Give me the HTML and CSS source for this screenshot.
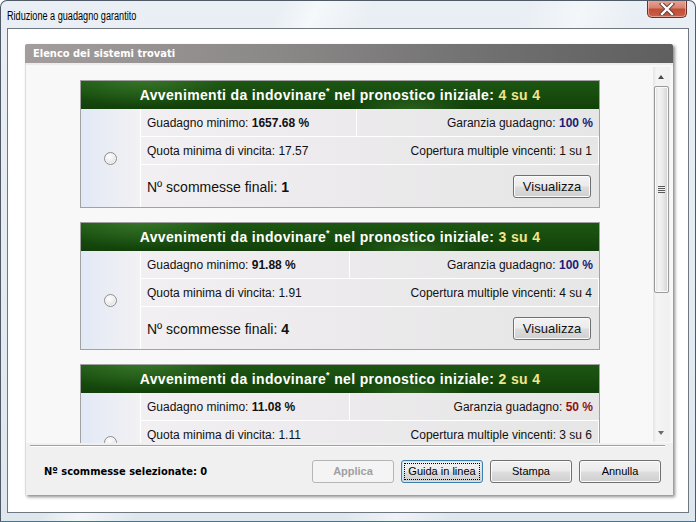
FILE: index.html
```html
<!DOCTYPE html>
<html>
<head>
<meta charset="utf-8">
<link rel="stylesheet" href="styles.css">
</head>
<body>
<div class="window">
  <div class="titlebar">
    <span class="title">Riduzione a guadagno garantito</span>
    <div class="close">
      <svg width="16" height="12" viewBox="0 0 16 12"><path d="M3 1 L13 11 M13 1 L3 11" stroke="#5a3a34" stroke-width="4.2" stroke-linecap="square"/><path d="M3 1 L13 11 M13 1 L3 11" stroke="#ffffff" stroke-width="2.4" stroke-linecap="square"/></svg>
    </div>
  </div>
  <div class="client">
    <div class="panel">
      <div class="panel-head">Elenco dei sistemi trovati</div>
      <div class="panel-body">
        <div class="list">
          <div class="cards">
            <div class="card c1">
              <div class="card-head">Avvenimenti da indovinare<sup>*</sup> nel pronostico iniziale: <span class="hl">4 su 4</span></div>
              <div class="grid">
                <div class="radio-cell"><span class="radio"></span></div>
                <div class="cell"><span>Guadagno minimo: <b>1657.68 %</b></span></div>
                <div class="cell right"><span>Garanzia guadagno: <b class="blue">100 %</b></span></div>
                <div class="cell"><span>Quota minima di vincita: 17.57</span></div>
                <div class="cell right"><span>Copertura multiple vincenti: 1 su 1</span></div>
                <div class="cell big"><span>Nº scommesse finali: <b>1</b></span></div>
                <div class="cell right"><button class="vis">Visualizza</button></div>
              </div>
            </div>
            <div class="card c2">
              <div class="card-head">Avvenimenti da indovinare<sup>*</sup> nel pronostico iniziale: <span class="hl">3 su 4</span></div>
              <div class="grid">
                <div class="radio-cell"><span class="radio"></span></div>
                <div class="cell"><span>Guadagno minimo: <b>91.88 %</b></span></div>
                <div class="cell right"><span>Garanzia guadagno: <b class="blue">100 %</b></span></div>
                <div class="cell"><span>Quota minima di vincita: 1.91</span></div>
                <div class="cell right"><span>Copertura multiple vincenti: 4 su 4</span></div>
                <div class="cell big"><span>Nº scommesse finali: <b>4</b></span></div>
                <div class="cell right"><button class="vis">Visualizza</button></div>
              </div>
            </div>
            <div class="card c2">
              <div class="card-head">Avvenimenti da indovinare<sup>*</sup> nel pronostico iniziale: <span class="hl">2 su 4</span></div>
              <div class="grid">
                <div class="radio-cell"><span class="radio"></span></div>
                <div class="cell"><span>Guadagno minimo: <b>11.08 %</b></span></div>
                <div class="cell right"><span>Garanzia guadagno: <b class="red">50 %</b></span></div>
                <div class="cell"><span>Quota minima di vincita: 1.11</span></div>
                <div class="cell right"><span>Copertura multiple vincenti: 3 su 6</span></div>
                <div class="cell big"><span>Nº scommesse finali: <b>6</b></span></div>
                <div class="cell right"><button class="vis">Visualizza</button></div>
              </div>
            </div>
          </div>
          <div class="scrollbar">
            <div class="arrow up"></div>
            <div class="thumb"><span class="grip"></span></div>
            <div class="track"></div>
            <div class="arrow down"></div>
          </div>
        </div>
        <div class="separator"></div>
        <div class="footer">
          <span class="selected">Nº scommesse selezionate: 0</span>
          <div class="buttons">
            <button class="btn disabled">Applica</button>
            <button class="btn focused"><span class="focus-ring">Guida in linea</span></button>
            <button class="btn">Stampa</button>
            <button class="btn">Annulla</button>
          </div>
        </div>
      </div>
    </div>
  </div>
</div>
</body>
</html>
```

FILE: styles.css
```css
* { box-sizing: border-box; }
html, body { margin: 0; padding: 0; }
body { width: 696px; height: 522px; overflow: hidden; background: #ffffff; }

.window {
  width: 696px;
  height: 522px;
  border: 1px solid #4f5a66;
  border-bottom-color: #2f7f9a;
  border-radius: 7px 7px 0 0;
  background:
    linear-gradient(115deg, rgba(255,255,255,0) 30%, rgba(255,255,255,0.6) 34%, rgba(255,255,255,0) 40%),
    linear-gradient(110deg, rgba(255,255,255,0) 60%, rgba(255,255,255,0.5) 66%, rgba(255,255,255,0) 72%),
    linear-gradient(180deg, #e9eff4 0%, #dfe7ee 100%);
  display: flex;
  flex-direction: column;
  overflow: hidden;
  font-family: "Liberation Sans", Arial, sans-serif;
}

.titlebar {
  height: 27px;
  flex: none;
  display: flex;
  align-items: flex-start;
  justify-content: space-between;
  padding-left: 6px;
  padding-right: 8px;
}
.title {
  font-family: "Liberation Sans", Arial, sans-serif;
  font-size: 12px;
  color: #000;
  margin-top: 8px;
  transform: scaleX(0.76);
  transform-origin: left center;
  white-space: nowrap;
}
.close {
  width: 40px;
  height: 18px;
  margin-top: -1px;
  border: 1px solid #6b3027;
  border-top: none;
  border-radius: 0 0 5px 5px;
  background: linear-gradient(180deg, #e8a898 0%, #d88270 45%, #c24d36 55%, #c8604a 100%);
  display: flex;
  align-items: center;
  justify-content: center;
  box-shadow: inset 0 0 0 1px rgba(255,220,210,0.5);
}

.client {
  flex: none;
  height: 485px;
  margin: 0 6px;
  border: 1px solid #6f7780;
  background: #ffffff;
  padding: 15px 0 0 17px;
}

.panel {
  width: 648px;
  height: 451px;
  display: flex;
  flex-direction: column;
  box-shadow: 2px 2px 3px rgba(0,0,0,0.45);
}
.panel-head {
  height: 19px;
  flex: none;
  background: linear-gradient(90deg, #a39d9d 0%, #8a8787 40%, #6e6e6e 75%, #5f5f5f 100%);
  color: #ffffff;
  font-family: "DejaVu Sans Condensed", "Liberation Sans", sans-serif;
  font-weight: bold;
  font-size: 11px;
  line-height: 19px;
  padding-left: 8px;
  border-radius: 2px 2px 0 0;
}
.panel-body {
  flex: 1;
  background: #f0f0f0;
  border-left: 1px solid #dcdcdc;
  display: flex;
  flex-direction: column;
}

.list {
  height: 380px;
  flex: none;
  display: flex;
  background: #f8f8f8;
  border-top: 2px solid #ececec;
  overflow: hidden;
}
.cards {
  flex: 1;
  padding: 15px 0 0 54px;
  display: flex;
  flex-direction: column;
  gap: 14px;
}

.card {
  width: 520px;
  flex: none;
  border: 1px solid #a2a2a2;
  background: #f0f0f0;
}
.card-head {
  height: 28px;
  background:
    radial-gradient(ellipse 90px 30px at 60px -4px, rgba(90,160,70,0.45), rgba(90,160,70,0) 100%),
    radial-gradient(ellipse 60px 18px at 330px 30px, rgba(90,160,70,0.35), rgba(90,160,70,0) 100%),
    linear-gradient(180deg, #1d5613 0%, #164a0d 60%, #12400a 100%);
  color: #ffffff;
  font-weight: bold;
  font-size: 14px;
  letter-spacing: 0.35px;
  line-height: 28px;
  text-align: center;
  white-space: nowrap;
}
.card-head sup {
  font-size: 9px;
  line-height: 0;
  vertical-align: 6px;
}
.hl { color: #f2e68c; }

.grid {
  display: grid;
  grid-template-rows: 28px 28px 42px;
  background: linear-gradient(90deg, #f3f1f3 0%, #eceaec 50%, #e6e6e6 100%);
}
.c1 .grid { grid-template-columns: 60px 216px 1fr; }
.c2 .grid { grid-template-columns: 60px 209px 1fr; }

.radio-cell {
  grid-row: 1 / span 3;
  background: linear-gradient(90deg, #e2e9f6 0%, #eceef4 60%, #f2f1f3 100%);
  display: flex;
  align-items: center;
  justify-content: center;
  padding-right: 1px;
  border-right: 1px solid #ffffff;
}
.radio {
  width: 13px;
  height: 13px;
  border-radius: 50%;
  border: 1px solid #8e8e8e;
  background: radial-gradient(circle at 40% 35%, #ffffff 0%, #eeeeee 45%, #cfcfcf 100%);
  box-shadow: inset 0 0 0 1px #f6f6f6;
}
.cell {
  display: flex;
  align-items: center;
  padding: 0 6px;
  font-size: 12px;
  color: #111111;
  white-space: nowrap;
  border-bottom: 1px solid #ffffff;
}
.cell:nth-child(3n+2) { border-right: 1px solid #ffffff; }
.cell:nth-last-child(-n+2) { border-bottom: none; }
.cell.right { justify-content: flex-end; }
.cell.big { font-size: 14px; padding-top: 1px; }
.blue { color: #1b1b78; }
.red { color: #8e1414; }

.vis {
  width: 78px;
  height: 23px;
  margin-right: 2px;
  margin-top: 1px;
  border: 1px solid #707070;
  border-radius: 3px;
  background: linear-gradient(180deg, #f3f3f3 0%, #ebebeb 48%, #dddddd 52%, #cfcfcf 100%);
  box-shadow: inset 0 0 0 1px #fbfbfb;
  font-family: "Liberation Sans", Arial, sans-serif;
  font-size: 13px;
  color: #111;
  padding: 0;
}

.scrollbar {
  width: 17px;
  flex: none;
  margin: 2px 3px 1px 0;
  background: linear-gradient(90deg, #e4e4e4 0%, #f4f4f4 20%, #f0f0f0 100%);
  display: flex;
  flex-direction: column;
}
.arrow {
  height: 19px;
  flex: none;
  position: relative;
}
.arrow::after {
  content: "";
  position: absolute;
  left: 5px;
  width: 0;
  height: 0;
  border-left: 3.5px solid transparent;
  border-right: 3.5px solid transparent;
}
.arrow.up::after { top: 8px; border-bottom: 4px solid #4a4a4a; }
.arrow.down::after { top: 8px; border-top: 4px solid #6a6a6a; }
.thumb {
  height: 207px;
  flex: none;
  margin: 0 1px;
  border: 1px solid #9a9a9a;
  border-radius: 2px;
  background: linear-gradient(90deg, #e0e0e0 0%, #f4f4f4 30%, #eaeaea 60%, #d2d2d2 100%);
  box-shadow: inset 0 0 0 1px #fafafa;
  display: flex;
  align-items: center;
  justify-content: center;
}
.grip {
  width: 7px;
  height: 7px;
  background: repeating-linear-gradient(180deg, #5a5a5a 0px, #5a5a5a 1px, #f0f0f0 1px, #f0f0f0 2px);
}
.track { flex: 1; }

.separator {
  height: 2px;
  flex: none;
  margin: 2px 8px 0 4px;
  border-top: 1px solid #a0a0a0;
  border-bottom: 1px solid #ffffff;
}
.footer {
  flex: 1;
  display: flex;
  align-items: center;
  justify-content: space-between;
  padding: 0 12px 0 18px;
}
.selected {
  font-family: "DejaVu Sans Condensed", "Liberation Sans", sans-serif;
  font-weight: bold;
  font-size: 11px;
  color: #000;
  white-space: nowrap;
}
.buttons {
  display: flex;
  gap: 7px;
}
.btn {
  width: 82px;
  height: 23px;
  border: 1px solid #707070;
  border-radius: 3px;
  background: linear-gradient(180deg, #f2f2f2 0%, #ebebeb 48%, #dddddd 52%, #cfcfcf 100%);
  box-shadow: inset 0 0 0 1px #fbfbfb;
  font-family: "Liberation Sans", Arial, sans-serif;
  font-size: 11px;
  line-height: 13px;
  color: #000;
  padding: 0;
  white-space: nowrap;
  display: flex;
  align-items: center;
  justify-content: center;
}
.btn.disabled {
  color: #a0a0a0;
  border-color: #b5b5b5;
  background: #f4f4f4;
  box-shadow: none;
  font-weight: bold;
}
.btn.focused {
  border-color: #3c7fb1;
  box-shadow: inset 0 0 0 1px #c6e6f6;
  padding: 2px;
}
.focus-ring {
  width: 100%;
  height: 100%;
  border: 1px dotted #000;
  display: flex;
  align-items: center;
  justify-content: center;
}
```
